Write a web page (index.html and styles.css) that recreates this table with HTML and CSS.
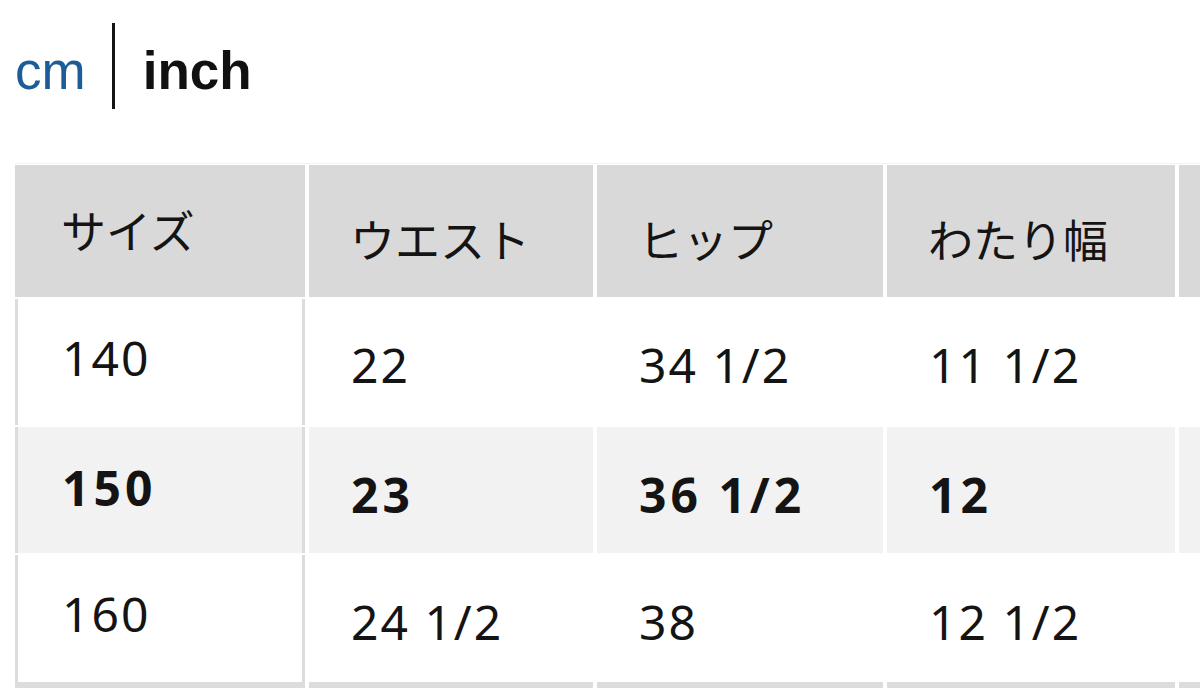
FILE: index.html
```html
<!DOCTYPE html>
<html lang="ja">
<head>
<meta charset="utf-8">
<link rel="stylesheet" href="styles.css">
</head>
<body>
<div class="units">
  <span class="unit unit-cm">cm</span>
  <span class="sep"></span>
  <span class="unit unit-inch">inch</span>
</div>
<div class="table-wrap">
  <div class="grid">
    <div class="cell head first">サイズ</div>
    <div class="cell head">ウエスト</div>
    <div class="cell head">ヒップ</div>
    <div class="cell head">わたり幅</div>
    <div class="cell head"></div>

    <div class="cell first">140</div>
    <div class="cell">22</div>
    <div class="cell">34 1/2</div>
    <div class="cell">11 1/2</div>
    <div class="cell"></div>

    <div class="cell first alt bold">150</div>
    <div class="cell alt bold">23</div>
    <div class="cell alt bold">36 1/2</div>
    <div class="cell alt bold">12</div>
    <div class="cell alt bold"></div>

    <div class="cell first last">160</div>
    <div class="cell last">24 1/2</div>
    <div class="cell last">38</div>
    <div class="cell last">12 1/2</div>
    <div class="cell last"></div>
  </div>
</div>
</body>
</html>
```

FILE: styles.css
```css
html, body {
  margin: 0;
  padding: 0;
  background: #ffffff;
  width: 1200px;
  height: 689px;
  overflow: hidden;
}

.units {
  display: flex;
  align-items: center;
  height: 130px;
  padding-left: 15px;
  box-sizing: border-box;
  padding-top: 2px;
  font-family: "Liberation Sans", Arial, sans-serif;
  font-size: 53px;
}

.unit {
  padding-top: 8px;
}

.unit-cm {
  color: #1d5d97;
}

.sep {
  width: 3px;
  height: 86px;
  background: #151515;
  margin: 0 28px 0 26px;
}

.unit-inch {
  color: #111111;
  font-weight: bold;
}

.table-wrap {
  margin-top: 33px;
  margin-left: 15px;
  overflow: hidden;
  border-top: 1px solid #f3f3f3;
  padding-top: 1px;
}

.grid {
  display: grid;
  grid-template-columns: 290px 284px 286px 288px 288px;
  grid-template-rows: 132px 126px 126px 133px;
  column-gap: 4px;
  row-gap: 2px;
  width: max-content;
  font-family: "Noto Sans", "Noto Sans CJK JP", sans-serif;
  color: #141414;
  font-size: 48px;
  letter-spacing: 2px;
}

.cell {
  display: flex;
  align-items: center;
  padding-left: 42px;
  padding-top: 4px;
  box-sizing: border-box;
  background: #ffffff;
}

.cell.first {
  padding-left: 44px;
  padding-top: 0;
  padding-bottom: 10px;
  border-left: 3px solid #dcdcdc;
  border-right: 3px solid #dcdcdc;
}

.cell.head {
  font-family: "Noto Sans CJK JP", sans-serif;
  background: #d9d9d9;
  font-size: 45px;
  letter-spacing: 0;
  padding-left: 41px;
  padding-top: 14px;
}

.cell.head.first {
  border-left: none;
  border-right: none;
  padding-left: 46px;
  padding-top: 0;
  padding-bottom: 4px;
}

.cell.alt {
  background: #f2f2f2;
  padding-top: 8px;
}

.cell.bold {
  font-weight: bold;
  letter-spacing: 4px;
}

.cell.first.alt {
  padding-top: 0;
  padding-bottom: 6px;
}

.cell.last {
  border-bottom: 6px solid #dcdcdc;
  padding-top: 6px;
}

.cell.first.last {
  padding-top: 0;
  padding-bottom: 10px;
}
```
